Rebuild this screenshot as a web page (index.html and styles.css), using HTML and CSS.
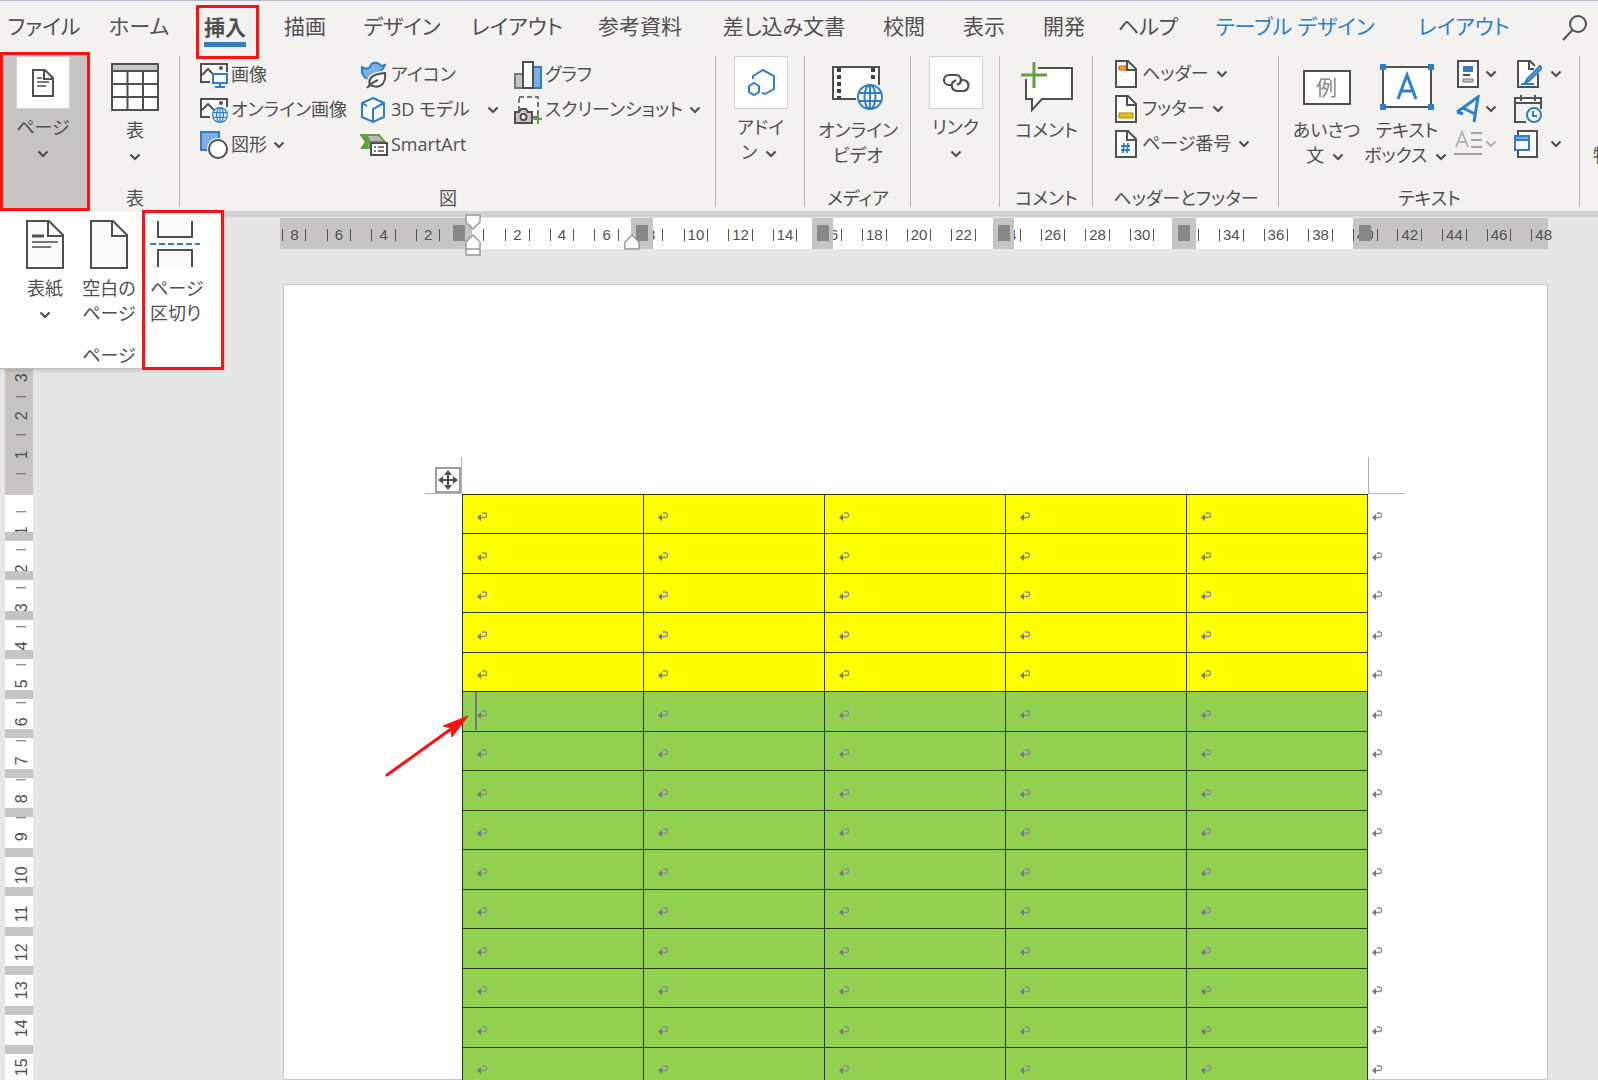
FILE: index.html
```html
<!DOCTYPE html>
<html lang="ja">
<head>
    <meta charset="UTF-8">
    <meta name="viewport" content="width=device-width, initial-scale=1.0">
    <title>Word</title>
    <link rel="stylesheet" href="styles.css">
</head>
<body>
    <svg class="defs" aria-hidden="true">
        <symbol id="chev" viewBox="0 0 12 8"><path d="M1.5 1.5 6 6l4.500-4.500" fill="none" stroke="currentColor" stroke-width="2.200"/></symbol>
        <symbol id="mark" viewBox="0 0 10 9"><path d="M5 1h2.500a2 2 0 0 1 0 4.500H2" fill="none" stroke="#8a8a9a" stroke-width="1.400"/><path d="M0 5.500 4 2v7z" fill="#77778a"/></symbol>
        <symbol id="sheet" viewBox="0 0 22 28"><path d="M1 1h12l8 8v18H1z" fill="#fff" stroke="#505050" stroke-width="2"/><path d="M12 1v9h9" fill="none" stroke="#505050" stroke-width="2"/></symbol>
        <symbol id="globe" viewBox="0 0 26 26"><circle cx="13" cy="13" r="12" fill="#fff" stroke="#2f7fc8" stroke-width="2"/><ellipse cx="13" cy="13" rx="5.500" ry="12" fill="none" stroke="#2f7fc8" stroke-width="2"/><path d="M13 1v24M1.500 9h23M1.500 17h23" stroke="#2f7fc8" stroke-width="2"/></symbol>
    </svg>

    <header>
        <nav class="tabs">
            <button class="tab">ファイル</button>
            <button class="tab">ホーム</button>
            <button class="tab active"><span>挿入</span></button>
            <button class="tab">描画</button>
            <button class="tab">デザイン</button>
            <button class="tab">レイアウト</button>
            <button class="tab">参考資料</button>
            <button class="tab">差し込み文書</button>
            <button class="tab">校閲</button>
            <button class="tab">表示</button>
            <button class="tab">開発</button>
            <button class="tab">ヘルプ</button>
            <button class="tab context">テーブル デザイン</button>
            <button class="tab context">レイアウト</button>
            <button class="tab search" aria-label="検索">
                <svg width="26" height="28" viewBox="0 0 26 28"><circle cx="16" cy="10" r="8" fill="none" stroke="#505050" stroke-width="2"/><path d="M10.500 16 1 26" stroke="#505050" stroke-width="2"/></svg>
            </button>
        </nav>

        <div class="ribbon">
            <button class="big page-button">
                <span class="boxed"><svg width="22" height="28" viewBox="0 0 22 28"><use href="#sheet"/><path d="M5 9h5M5 13h12M5 17h9" stroke="#505050" stroke-width="1.500"/></svg></span>
                <span>ページ</span>
                <span><svg class="chev"><use href="#chev"/></svg></span>
            </button>

            <section class="group">
                <button class="big">
                    <span class="icon"><svg width="48" height="48" viewBox="0 0 48 48"><path d="M1 1h46v46H1z" fill="#fff"/><path d="M1 1h46v7H1z" fill="#c8c6c4"/><path d="M1 1h46v46H1zM1 8h46M1 21h46M1 34h46M16.500 8v39M32 8v39" fill="none" stroke="#505050" stroke-width="2"/></svg></span>
                    <span>表</span>
                    <span><svg class="chev"><use href="#chev"/></svg></span>
                </button>
                <h2>表</h2>
            </section>

            <section class="group">
                <div class="columns">
                    <div class="stack">
                        <button class="small">
                            <svg width="28" height="28" viewBox="0 0 28 28"><path d="M10 21H1V3h26v8" fill="#fff" stroke="#505050" stroke-width="2"/><path d="m2 14 6-6 6 6" fill="none" stroke="#505050" stroke-width="2"/><circle cx="21" cy="7" r="2" fill="#505050"/><path d="M13 13h14v9H13zM20 22v4M15 26h10" fill="#fff" stroke="#2f7fc8" stroke-width="2"/></svg>
                            画像
                        </button>
                        <button class="small">
                            <svg width="28" height="28" viewBox="0 0 28 28"><path d="M10 21H1V3h26v8" fill="#fff" stroke="#505050" stroke-width="2"/><path d="m2 14 6-6 6 6" fill="none" stroke="#505050" stroke-width="2"/><circle cx="21" cy="7" r="2" fill="#505050"/><use href="#globe" x="12" y="11" width="16" height="16"/></svg>
                            オンライン画像
                        </button>
                        <button class="small">
                            <svg width="28" height="28" viewBox="0 0 28 28"><path d="M1 1h18v18H1z" fill="#7db0e0" stroke="#2f7fc8" stroke-width="2"/><circle cx="18" cy="18" r="11" fill="#f3f2f1"/><circle cx="18" cy="18" r="9" fill="#fff" stroke="#505050" stroke-width="2"/></svg>
                            図形 <svg class="chev"><use href="#chev"/></svg>
                        </button>
                    </div>
                    <div class="stack">
                        <button class="small">
                            <svg width="28" height="28" viewBox="0 0 28 28"><path d="M2 6c3 2 6 2 8 0 1-5 8-6 11-1l4-1c-1 3-3 5-5 7-3 2-6 4-9 8C4 18 1 13 2 6z" fill="#7db0e0" stroke="#2f7fc8" stroke-width="2"/><path d="M10 24c-3-8 5-11 15-12 1 7-2 16-12 13z" fill="#fff" stroke="#f3f2f1" stroke-width="5"/><path d="M10 24c-3-8 5-11 15-12 1 7-2 16-12 13z" fill="#fff" stroke="#505050" stroke-width="2"/><path d="M7 27c3-4 6-6 11-8" fill="none" stroke="#505050" stroke-width="2"/></svg>
                            アイコン
                        </button>
                        <button class="small">
                            <svg width="28" height="28" viewBox="0 0 28 28"><path d="m13 2 11 5v14l-11 5-11-5V7z" fill="#fff" stroke="#2f7fc8" stroke-width="2"/><path d="m2 7 5 3M24 7l-11 6v13" fill="none" stroke="#2f7fc8" stroke-width="2"/></svg>
                            3D モデル <svg class="chev far"><use href="#chev"/></svg>
                        </button>
                        <button class="small">
                            <svg width="28" height="28" viewBox="0 0 28 28"><path d="M1 4h18l6 7H12l-3 6H2l4-6z" fill="#b9b9b9" stroke="#62a03f" stroke-width="2"/><path d="M1 4h6l4 6-4 7H2l4-6z" fill="#62a03f"/><path d="M11 12h16v12H11z" fill="#fff" stroke="#505050" stroke-width="2"/><path d="M14 16h2M18 16h6M14 20h2M18 20h6" stroke="#505050" stroke-width="1.500"/></svg>
                            SmartArt
                        </button>
                    </div>
                    <div class="stack">
                        <button class="small">
                            <svg width="28" height="28" viewBox="0 0 28 28"><path d="M1 13h8v14H1z" fill="#c8c6c4" stroke="#777" stroke-width="2"/><path d="M19 6h8v21h-8z" fill="#7db0e0" stroke="#2f7fc8" stroke-width="2"/><path d="M9 1h10v26H9z" fill="#fff" stroke="#505050" stroke-width="2"/></svg>
                            グラフ
                        </button>
                        <button class="small">
                            <svg width="28" height="28" viewBox="0 0 28 28"><path d="M5 1h19v20H5z" fill="#fff" stroke="#777" stroke-width="2" stroke-dasharray="5 3"/><path d="M1 16h4l2-3h5l2 3h4v11H1z" fill="#c8c6c4" stroke="#505050" stroke-width="2"/><circle cx="9.500" cy="21" r="3" fill="#fff" stroke="#505050" stroke-width="2"/><path d="M24 18v10M19.500 23h9" stroke="#62a03f" stroke-width="2"/></svg>
                            スクリーンショット <svg class="chev"><use href="#chev"/></svg>
                        </button>
                    </div>
                </div>
                <h2>図</h2>
            </section>

            <section class="group">
                <button class="big">
                    <span class="boxed"><svg width="28" height="28" viewBox="0 0 28 28"><path d="M6 10V7l10-6 11 6v13l-9 5-3-1" fill="none" stroke="#2f7fc8" stroke-width="2"/><path d="m7 14 5 3v6l-5 3-5-3v-6z" fill="none" stroke="#2f7fc8" stroke-width="2"/></svg></span>
                    <span>アドイ</span>
                    <span>ン <svg class="chev"><use href="#chev"/></svg></span>
                </button>
            </section>

            <section class="group">
                <button class="big">
                    <span class="icon"><svg width="52" height="48" viewBox="0 0 52 48"><path d="M24 36H1V4h46v18" fill="#fff" stroke="#505050" stroke-width="2"/><path d="M7 5v30M41 5v14" stroke="#404040" stroke-width="4" stroke-dasharray="4 3"/><circle cx="38" cy="34" r="14" fill="#f3f2f1"/><use href="#globe" x="25" y="21" width="26" height="26"/></svg></span>
                    <span>オンライン</span>
                    <span>ビデオ</span>
                </button>
                <h2>メディア</h2>
            </section>

            <section class="group">
                <button class="big">
                    <span class="boxed"><svg width="28" height="20" viewBox="0 0 28 20"><path d="M10 12H7a5 5 0 0 1 0-10h7a5 5 0 0 1 4 8l-3 2" fill="none" stroke="#505050" stroke-width="2.200"/><path d="M18 7h3a5.500 5.500 0 0 1 0 11h-6a5.500 5.500 0 0 1-4-9l3-2" fill="none" stroke="#505050" stroke-width="2.200"/></svg></span>
                    <span>リンク</span>
                    <span><svg class="chev"><use href="#chev"/></svg></span>
                </button>
            </section>

            <section class="group">
                <button class="big">
                    <span class="icon"><svg width="52" height="52" viewBox="0 0 52 52"><path d="M17 7h34v31H21L11 49V38H5V18" fill="#fff" stroke="#505050" stroke-width="2"/><path d="M13 1v26M0 14h26" stroke="#62a03f" stroke-width="3"/></svg></span>
                    <span>コメント</span>
                </button>
                <h2>コメント</h2>
            </section>

            <section class="group">
                <div class="columns header-footer">
                    <div class="stack">
                        <button class="small">
                            <svg width="22" height="28" viewBox="0 0 22 28"><use href="#sheet"/><path d="M4 6h7v4H4z" fill="#f0b400" stroke="#e0442c"/></svg>
                            ヘッダー <svg class="chev"><use href="#chev"/></svg>
                        </button>
                        <button class="small">
                            <svg width="22" height="28" viewBox="0 0 22 28"><use href="#sheet"/><path d="M4 18h14v5H4z" fill="#e8c020" stroke="#a08a00"/></svg>
                            フッター <svg class="chev"><use href="#chev"/></svg>
                        </button>
                        <button class="small">
                            <svg width="22" height="28" viewBox="0 0 22 28"><use href="#sheet"/><path d="m9 13-1 10M13 13l-1 10M6 16h9M6 20h9" stroke="#2f7fc8" stroke-width="1.800"/></svg>
                            ページ番号 <svg class="chev"><use href="#chev"/></svg>
                        </button>
                    </div>
                </div>
                <h2>ヘッダーとフッター</h2>
            </section>

            <section class="group">
                <div class="columns text-tools">
                    <button class="big">
                        <span class="icon"><span class="sample">例</span></span>
                        <span>あいさつ</span>
                        <span>文 <svg class="chev"><use href="#chev"/></svg></span>
                    </button>
                    <button class="big">
                        <span class="icon"><svg width="54" height="46" viewBox="0 0 54 46"><path d="M3 3h48v40H3z" fill="#fff" stroke="#505050" stroke-width="2"/><path d="m18 35 9-24 9 24M21 27h12" fill="none" stroke="#2f7fc8" stroke-width="3"/><path d="M0 0h6v6H0zM48 0h6v6h-6zM0 40h6v6H0zM48 40h6v6h-6z" fill="#2f7fc8"/></svg></span>
                        <span>テキスト</span>
                        <span>ボックス <svg class="chev"><use href="#chev"/></svg></span>
                    </button>
                    <div class="stack tools">
                        <button class="small" aria-label="クイック パーツ">
                            <svg width="28" height="28" viewBox="0 0 28 28"><path d="M4 1h20v26H4z" fill="#fff" stroke="#505050" stroke-width="2"/><path d="M9 6h10v6H9z" fill="#2f7fc8"/><path d="M9 15h7" stroke="#505050" stroke-width="2"/><path d="M9 19h10v3H9z" fill="#c8c6c4" stroke="#777"/></svg>
                            <svg class="chev"><use href="#chev"/></svg>
                        </button>
                        <button class="small" aria-label="ワードアート">
                            <svg width="28" height="28" viewBox="0 0 28 28"><path d="M3 17 24 2l-4 25M3 17l6 2M9 13l12 6" fill="none" stroke="#2f7fc8" stroke-width="3"/></svg>
                            <svg class="chev"><use href="#chev"/></svg>
                        </button>
                        <button class="small" aria-label="ドロップ キャップ" disabled>
                            <svg width="28" height="28" viewBox="0 0 28 28"><path d="M2 17 8 2l6 15M4 12h8" fill="none" stroke="#b4b4b4" stroke-width="2"/><path d="M17 3h11M17 10h11M17 17h11M0 24h28" stroke="#a4a4a4" stroke-width="2"/></svg>
                            <svg class="chev"><use href="#chev"/></svg>
                        </button>
                    </div>
                    <div class="stack tools wide">
                        <button class="small" aria-label="署名欄">
                            <svg width="28" height="28" viewBox="0 0 28 28"><path d="M24 14v13H4V1h12l5 5" fill="#fff" stroke="#505050" stroke-width="2"/><path d="M15 1v8h5" fill="none" stroke="#505050" stroke-width="2"/><path d="m26 6-13 13-2 4 4-2L28 8zM7 24h13" fill="#7db0e0" stroke="#2f7fc8" stroke-width="2"/></svg>
                            <svg class="chev"><use href="#chev"/></svg>
                        </button>
                        <button class="small" aria-label="日付と時刻">
                            <svg width="28" height="28" viewBox="0 0 28 28"><path d="M12 27H1V3h26v11M1 8h26M7 0v6M21 0v6" fill="none" stroke="#505050" stroke-width="2"/><circle cx="20" cy="20" r="7" fill="#fff" stroke="#2f7fc8" stroke-width="2"/><path d="M19 16v5h4" fill="none" stroke="#2f7fc8" stroke-width="2"/></svg>
                        </button>
                        <button class="small" aria-label="オブジェクト">
                            <svg width="28" height="28" viewBox="0 0 28 28"><path d="M4 1h19v26H4z" fill="#fff" stroke="#505050" stroke-width="2"/><path d="M1 6h14v14H1z" fill="#fff" stroke="#2f7fc8" stroke-width="2"/><path d="M1 6h14v4H1z" fill="#7db0e0" stroke="#2f7fc8" stroke-width="2"/></svg>
                            <svg class="chev"><use href="#chev"/></svg>
                        </button>
                    </div>
                </div>
                <h2>テキスト</h2>
            </section>

            <section class="group clipped">
                <button class="big">
                    <span class="icon"></span>
                    <span></span>
                    <span>特殊文字</span>
                </button>
            </section>
        </div>

        <div class="dropdown">
            <button class="big">
                <svg width="38" height="50" viewBox="0 0 38 50"><path d="M1 2h22l14 14v33H1z" fill="#fafafa" stroke="#505050" stroke-width="2"/><path d="M22 2v15h15" fill="none" stroke="#505050" stroke-width="2"/><path d="M6 17h12" stroke="#505050" stroke-width="3"/><path d="M6 23h26M6 28h19" stroke="#777" stroke-width="2"/></svg>
                <span>表紙</span>
                <span><svg class="chev"><use href="#chev"/></svg></span>
            </button>
            <div class="blank">
                <button class="big">
                    <svg width="38" height="50" viewBox="0 0 38 50"><path d="M1 2h22l14 14v33H1z" fill="#fafafa" stroke="#505050" stroke-width="2"/><path d="M22 2v15h15" fill="none" stroke="#505050" stroke-width="2"/></svg>
                    <span>空白の</span>
                    <span>ページ</span>
                </button>
                <h2>ページ</h2>
            </div>
            <button class="big break">
                <svg width="50" height="50" viewBox="0 0 50 50"><path d="M8 2v16h34V2M8 48V31h34v17" fill="#fafafa" stroke="#505050" stroke-width="2"/><path d="M0 25h50" stroke="#2f7fc8" stroke-width="2" stroke-dasharray="6 3"/></svg>
                <span>ページ</span>
                <span>区切り</span>
            </button>
        </div>
    </header>

    <main>
        <div class="ruler">
            <div class="ruler-back"><i></i><i></i><i></i></div>
            <div class="ruler-scale" id="rulerScale"></div>
            <div class="ruler-stops">
                <b class="s1"></b>
                <i class="s2"><b></b></i>
                <i class="s3"><b></b></i>
                <i class="s4"><b></b></i>
                <i class="s5"><b></b></i>
                <b class="s6"></b>
            </div>
            <svg class="indent" width="18" height="42" viewBox="0 0 18 42"><path d="M2 1h14v7l-7 7-7-7zM2 35v-7l7-7 7 7v7zM2 35h14v6H2z" fill="#fff" stroke="#999" stroke-width="1.500"/></svg>
            <svg class="indent right" width="18" height="18" viewBox="0 0 18 18"><path d="M2 16V9l7-7 7 7v7z" fill="#fff" stroke="#999" stroke-width="1.500"/></svg>
        </div>

        <div class="workspace">
            <div class="side-ruler">
                <div class="side-scale" id="sideScale"></div>
                <div class="side-rows" id="sideRows"></div>
            </div>
            <div class="sheet">
                <div class="body-area">
                    <i class="corner left"></i>
                    <i class="corner right"></i>
                    <svg class="handle" width="26" height="26" viewBox="0 0 26 26"><path d="M1 1h24v24H1z" fill="#fff" stroke="#a0a0a0" stroke-width="2"/><path d="M13 5v16M5 13h16" stroke="#505050" stroke-width="2"/><path d="m13 3 4 5H9zM13 23l4-5H9zM3 13l5-4v8zM23 13l-5-4v8z" fill="#505050"/></svg>
                    <table>
                        <tbody id="docRows"></tbody>
                    </table>
                    <i class="caret"></i>
                    <svg class="arrow" width="86" height="66" viewBox="0 0 86 66"><path d="M2 62 66 16" stroke="#f11" stroke-width="3" stroke-linecap="round"/><path d="M83 3 58 13l8 2 1 9z" fill="#f11" stroke="#f11"/></svg>
                </div>
            </div>
        </div>
    </main>
    <script src="script.js"></script>
</body>
</html>
```

FILE: styles.css
```css
* {
    box-sizing: border-box;
}
body {
    margin: 0;
    height: 100vh;
    overflow: hidden;
    display: flex;
    flex-direction: column;
    background: #e6e6e6;
    color: #505050;
    font-family: "Open Sans", "Noto Sans CJK JP", sans-serif;
    font-feature-settings: "palt";
    font-size: 18px;
    line-height: 25px;
}
button {
    border: 0;
    padding: 0;
    background: none;
    color: inherit;
    font: inherit;
    font-feature-settings: inherit;
    white-space: nowrap;
}
h2 {
    margin: auto 0 0;
    font-size: 18px;
    font-weight: normal;
    line-height: 25px;
    text-align: center;
    white-space: nowrap;
}
svg {
    flex: none;
}
.defs {
    position: absolute;
    width: 0;
    height: 0;
}
.chev {
    width: 12px;
    height: 8px;
    margin: 0 3px;
    vertical-align: middle;
}

/* tabs */
header {
    position: relative;
    background: #f3f2f1;
    border-top: 1px solid #b0b8c4;
    border-bottom: 6px solid #d2d2d2;
}
.tabs {
    display: grid;
    grid-template-columns: 88fr 102fr 74fr 82fr 112fr 118fr 128fr 160fr 80fr 80fr 80fr 88fr 206fr 132fr 68fr;
    height: 51px;
}
.tab {
    min-width: 0;
    padding-bottom: 8px;
    font-size: 21px;
    line-height: 30px;
}
.tab.active {
    position: relative;
    z-index: 1;
    justify-self: center;
    align-self: start;
    margin-top: 4px;
    width: 63px;
    height: 54px;
    padding: 0 4px 6px 0;
    border: 3px solid #f11;
    font-weight: bold;
}
.tab.active span {
    display: inline-block;
    border-bottom: 5px solid #2f7fc8;
}
.tab.context {
    color: #2f7fc8;
}
.tab.search {
    padding-left: 22px;
}
.tab.search svg {
    vertical-align: middle;
}

/* ribbon */
.ribbon {
    display: grid;
    grid-template-columns: 90fr 90fr 536fr 89fr 106fr 89fr 93fr 186fr 301fr 18fr;
    height: 159px;
}
.group {
    display: flex;
    flex-direction: column;
    min-width: 0;
    margin: 4px 0 0;
    background: linear-gradient(#b8b8b8, #b8b8b8) right top / 1px 151px no-repeat;
}
.group.clipped {
    overflow: hidden;
    background: none;
}
.clipped .big {
    align-items: flex-start;
    padding-left: 13px;
}
.big {
    display: flex;
    flex-direction: column;
    align-items: center;
    justify-content: flex-start;
}
.big > span {
    min-height: 25px;
}
.big .icon {
    display: flex;
    align-items: center;
    justify-content: center;
    height: 62px;
}
.big .boxed {
    display: flex;
    align-items: center;
    justify-content: center;
    width: 54px;
    height: 53px;
    margin-bottom: 6px;
    background: #fff;
    border: 1px solid #d0d0d0;
}
.page-button {
    border: 3px solid #f11;
    background: #c6c5c4;
    padding: 1px 4px 0 0;
}
.sample {
    width: 48px;
    height: 35px;
    border: 2px solid #505050;
    background: #fff;
    color: #888;
    font-size: 21px;
    line-height: 30px;
    text-align: center;
}
.columns {
    display: grid;
    grid-template-columns: 160fr 154fr 202fr;
    padding: 1px 0 0 20px;
}
.columns.header-footer {
    grid-template-columns: 1fr;
    padding: 0 0 0 22px;
}
.columns.text-tools {
    grid-template-columns: 78fr 78fr 60fr 75fr;
    padding: 0 0 0 10px;
}
.stack {
    display: flex;
    flex-direction: column;
    align-items: flex-start;
}
.small {
    display: flex;
    align-items: center;
    gap: 3px;
    height: 35px;
}
.header-footer .small {
    gap: 5px;
}
.header-footer .chev {
    margin: 0 2px;
}
.tools {
    padding-left: 4px;
}
.tools .chev {
    margin: 0;
}
.tools.wide {
    padding-left: 6px;
}
.tools.wide .small {
    gap: 8px;
}
.chev.far {
    margin-left: 14px;
}
button:disabled {
    color: #b4b4b4;
}

/* page menu */
.dropdown {
    position: absolute;
    z-index: 2;
    top: 210px;
    left: 0;
    display: flex;
    width: 224px;
    height: 158px;
    padding-left: 16px;
    background: #fff;
    border-bottom: 1px solid #bbb;
    box-shadow: 0 2px 4px #0002;
}
.dropdown .big {
    padding-top: 8px;
    width: 58px;
}
.dropdown svg:not(.chev) {
    margin-bottom: 7px;
}
.dropdown .blank {
    display: flex;
    flex-direction: column;
    width: 70px;
    align-items: center;
}
.dropdown .break {
    width: 82px;
    height: 160px;
    margin: -1px 0 0 -2px;
    padding: 6px 0 0 5px;
    border: 3px solid #f11;
    align-items: flex-start;
}

/* horizontal ruler */
main {
    flex: 1;
    min-height: 0;
    display: flex;
    flex-direction: column;
}
.ruler {
    position: relative;
    display: grid;
    height: 28px;
    margin: 1px 32px 0 272px;
    font-size: 15px;
    line-height: 28px;
}
.ruler-back,
.ruler-scale,
.ruler-stops {
    grid-area: 1 / 1;
    display: grid;
    min-width: 0;
}
.ruler-back {
    grid-template-columns: 192fr 881fr 195fr;
    margin: 0 18px 0 8px;
    background: #c6c5c4;
}
.ruler-back i:nth-child(2) {
    background: #fff;
}
.ruler-scale {
    grid-auto-flow: column;
    grid-auto-columns: 1fr;
    font-family: "Liberation Sans", sans-serif;
}
.ruler-scale span {
    display: flex;
    align-items: center;
    justify-content: center;
    gap: 3px;
    padding-top: 3px;
}
.ruler-scale span::before,
.ruler-scale span::after {
    content: "";
    width: 1px;
    height: 12px;
    background: #555;
}
.ruler-scale span::before {
    order: -1;
}
.ruler-scale .one {
    gap: 7px;
}
.ruler-scale .zero {
    gap: 20px;
}
.ruler-scale .last::after {
    visibility: hidden;
}
.ruler-stops {
    grid-template-columns: 181fr 13fr 165fr 22fr 159fr 21fr 160fr 21fr 158fr 24fr 163fr 12fr 195fr;
}
.ruler-stops i {
    display: flex;
    justify-content: center;
    background: #c6c5c4;
}
.ruler-stops b {
    width: 12px;
    height: 16px;
    margin-top: 7px;
    background: #888;
}
.s1 { grid-column: 2; }
.s2 { grid-column: 4; }
.s3 { grid-column: 6; }
.s4 { grid-column: 8; }
.s5 { grid-column: 10; }
.s6 { grid-column: 12; }
.indent {
    position: absolute;
    top: -4px;
    left: 192px;
}
.indent.right {
    top: 15px;
    left: 351px;
}

/* document */
.workspace {
    flex: 1;
    min-height: 0;
    display: flex;
}
.side-ruler {
    display: grid;
    align-self: flex-start;
    width: 28px;
    height: 840px;
    margin-left: 5px;
    background: linear-gradient(#c6c5c4 249px, #fff 249px);
}
.side-scale,
.side-rows {
    grid-area: 1 / 1;
}
.side-scale {
    display: grid;
    grid-auto-rows: 1fr;
    margin-top: 113px;
    padding-left: 5px;
    font-family: "Liberation Sans", sans-serif;
    font-size: 16px;
    line-height: 22px;
}
.side-scale span {
    display: flex;
    align-items: center;
    justify-content: center;
    writing-mode: vertical-rl;
    transform: rotate(180deg);
    background: linear-gradient(#666, #666) center top / 10px 1px no-repeat;
}
.side-rows {
    z-index: 1;
    padding-top: 286px;
}
.side-rows i {
    display: block;
    height: 9px;
    margin-bottom: 30px;
    background: #c6c5c4;
}
.side-rows i:nth-child(even) {
    margin-bottom: 31px;
}
.sheet {
    flex: 1;
    margin: 38px 50px 0 250px;
    padding: 209px 162px 0 178px;
    background: #fff;
    border: 1px solid #c8c8c8;
}
.body-area {
    position: relative;
}
table {
    width: 100%;
    table-layout: fixed;
    border-collapse: collapse;
}
td {
    height: 39px;
    padding: 5px 0 0 14px;
    border: 1px solid #2c3a10;
    line-height: 9px;
    background: #92d050;
}
tr:nth-child(even) td {
    height: 40px;
}
tr.yellow td {
    background: #ff0;
    border-color: #33330a;
}
tr td.end {
    width: 18px;
    padding-left: 4px;
    border-width: 0 0 0 1px;
    background: none;
}
td svg {
    display: block;
    width: 10px;
    height: 9px;
}
.corner {
    position: absolute;
    top: -37px;
    width: 37px;
    height: 37px;
    border-bottom: 1px solid #b0b0b0;
}
.corner.left {
    left: -37px;
    border-right: 1px solid #b0b0b0;
}
.corner.right {
    right: -20px;
    border-left: 1px solid #b0b0b0;
}
.handle {
    position: absolute;
    top: -27px;
    left: -27px;
}
.caret {
    position: absolute;
    top: 198px;
    left: 13px;
    width: 2px;
    height: 38px;
    background: #777;
}
.arrow {
    position: absolute;
    top: 219px;
    left: -77px;
}
```

FILE: script.js
```js
const ROWS = 15;
const COLS = 5;
const mark = '<svg><use href="#mark"/></svg>';

// horizontal scale counts by two on both sides of the left margin
function fillRuler() {
    const scale = document.getElementById("rulerScale");
    for (let n = -8; n <= 48; n += 2) {
        const cell = document.createElement("span");
        cell.textContent = n === 0 ? "" : Math.abs(n);
        if (n === 0) cell.className = "zero";
        else if (Math.abs(n) < 10) cell.className = "one";
        if (n === 48) cell.className = "last";
        scale.appendChild(cell);
    }
}

function fillSideRuler() {
    const scale = document.getElementById("sideScale");
    for (let n = -3; n <= ROWS; n++) {
        const cell = document.createElement("span");
        cell.textContent = n === 0 ? "" : Math.abs(n);
        scale.appendChild(cell);
    }
    document.getElementById("sideRows").innerHTML = "<i></i>".repeat(ROWS - 1);
}

function fillTable() {
    const tbody = document.getElementById("docRows");
    for (let r = 0; r < ROWS; r++) {
        const row = tbody.insertRow();
        if (r < 5) row.className = "yellow";
        row.innerHTML = `<td>${mark}</td>`.repeat(COLS) + `<td class="end">${mark}</td>`;
    }
}

fillRuler();
fillSideRuler();
fillTable();
```
